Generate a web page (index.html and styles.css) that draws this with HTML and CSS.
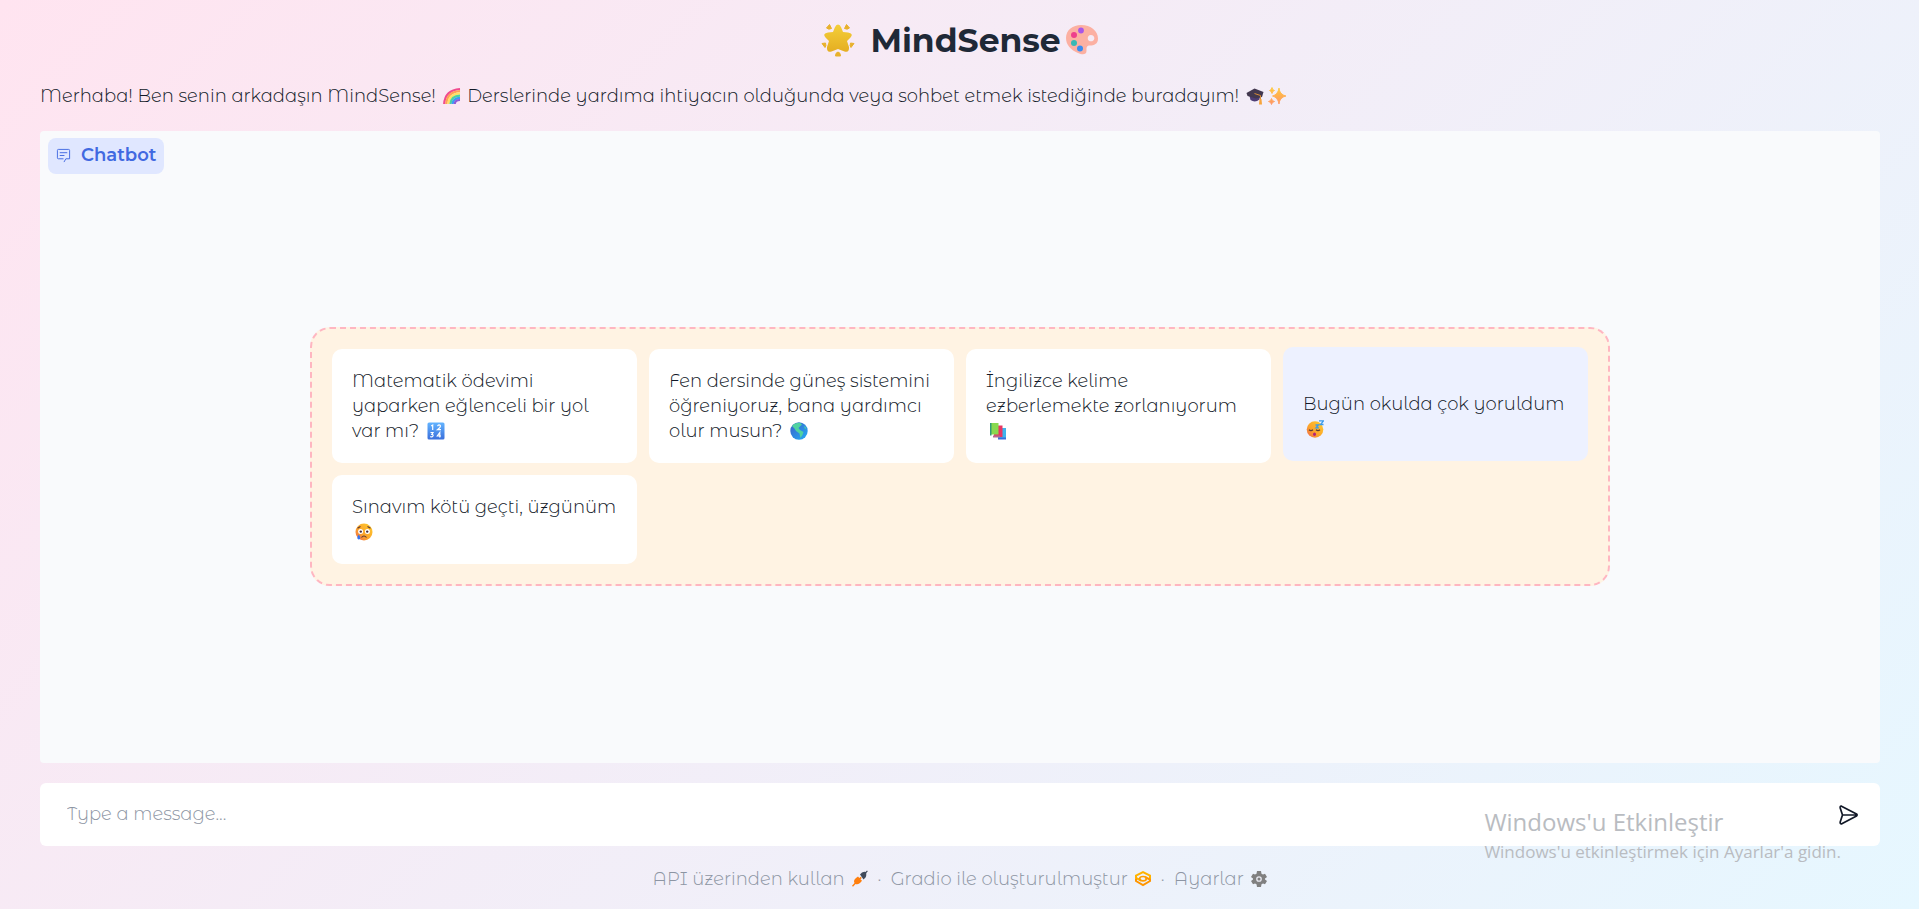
FILE: index.html
```html
<!DOCTYPE html>
<html lang="tr">
<head>
<meta charset="utf-8">
<meta name="viewport" content="width=device-width, initial-scale=1">
<title>MindSense</title>
<link rel="stylesheet" href="styles.css">
</head>
<body>
<svg class="defs" aria-hidden="true">
  <defs>
    <linearGradient id="gold" x1="0" y1="0" x2="0" y2="1"><stop offset="0" stop-color="#f4cf3a"/><stop offset="1" stop-color="#e5ae22"/></linearGradient>
    <linearGradient id="spark" x1="0" y1="0" x2="0" y2="1"><stop offset="0" stop-color="#ffca3c"/><stop offset="1" stop-color="#ff9566"/></linearGradient>
    <linearGradient id="blue" x1="0" y1="0" x2="0" y2="1"><stop offset="0" stop-color="#63b4ff"/><stop offset="1" stop-color="#3a6fdc"/></linearGradient>
    <linearGradient id="face" x1="1" y1="0" x2="0" y2="1"><stop offset="0" stop-color="#ffce2e"/><stop offset="0.6" stop-color="#fba32c"/><stop offset="1" stop-color="#f0624f"/></linearGradient>
    <linearGradient id="sea" x1="0" y1="0" x2="1" y2="1"><stop offset="0" stop-color="#3b5fc8"/><stop offset="1" stop-color="#22aef5"/></linearGradient>
  </defs>
</svg>
<main class="page">
  <h1 class="title">
    <svg class="title-icon" viewBox="0 0 34 34" aria-hidden="true">
      <path d="M17 1.500Q19 1.500 20.200 4.500L22 9L27 9.500Q33 10.500 29.500 14.500L26 18L28 24Q28.500 30 23.500 28.500L17 26L10.500 28.500Q5.500 30 6 24L8 18L4.500 14.500Q1 10.500 7 9.500L12 9L13.800 4.500Q15 1.500 17 1.500Z" fill="url(#gold)"/>
      <path d="M8.500 1.500L10.500 5.500Q7.500 7 5.500 5ZM25.500 1.500L23.500 5.500Q26.500 7 28.500 5ZM1 20.500L4.500 20Q5.500 23 4 24.500ZM33 20.500L29.500 20Q28.500 23 30 24.500ZM17 29Q19.500 29.500 19.500 33L14.500 33Q14.500 29.500 17 29Z" fill="#e8b12c" stroke="#e8b12c" stroke-linejoin="round"/>
    </svg>
    <span>MindSense</span>
    <svg class="title-icon palette" viewBox="0 0 34 34" aria-hidden="true">
      <path fill-rule="evenodd" d="M1 15C1 7 8 2 16 2C26 2 33 8 33 15.500C33 21 29 22.500 25 22.500C21 22.500 21.500 25 21.500 28C21.500 32 17 32 13 30C6 27 1 22 1 15ZM26 12C23.500 12 22.500 14 22.800 16C23.200 18.500 26.500 19 28.300 17.500C30.500 15.500 29 12 26 12Z" fill="#fcb0a2"/>
      <circle cx="16" cy="7.500" r="2.900" fill="#a955e8"/><circle cx="9" cy="12" r="3" fill="#ee3f8c"/><circle cx="9" cy="20" r="3" fill="#38b8b5"/><circle cx="15" cy="25.500" r="3" fill="#3b8cf0"/>
    </svg>
  </h1>
  <p class="intro">Merhaba! Ben senin arkadaşın MindSense!
    <svg class="emoji" viewBox="0 0 18 18" aria-hidden="true"><g fill="none" stroke-width="2.200"><path d="M1.200 17Q2 3 17 2" stroke="#f04b8e"/><path d="M3.300 17Q4 5 17 4.200" stroke="#ffa057"/><path d="M5.400 17Q6 7 17 6.400" stroke="#ffe066"/><path d="M7.500 17Q8 9 17 8.600" stroke="#4cd2a0"/><path d="M9.600 17Q10 11 17 10.800" stroke="#3d9cf5"/><path d="M11.700 17Q12 13 17 13" stroke="#8c5cd8"/></g></svg>
    Derslerinde yardıma ihtiyacın olduğunda veya sohbet etmek istediğinde buradayım!
    <svg class="emoji" viewBox="0 0 18 18" aria-hidden="true"><path d="M3.500 9L14 9L13.500 12.500Q9 16 4.500 13Z" fill="#4d3d75"/><path d="M.5 6L8.500 1.500L17.500 5L16 10L10 11.500L1.500 9Z" fill="#42384e"/><path d="M8.500 6.500L14.500 8.500V14" fill="none" stroke="#d98b35"/><path d="M13.500 12H15.500L16 17.500H13Z" fill="#f7a43c"/></svg><svg class="emoji" viewBox="0 0 18 18" aria-hidden="true"><path d="M11 1Q11.500 7.500 18 9Q11.500 10.500 11 17Q10 10.500 4.500 9Q10 7.500 11 1ZM4 .5Q4.300 3 6.500 3.500Q4.300 4 4 6.500Q3.500 4 1.500 3.500Q3.500 3 4 .5ZM3.500 11.500Q4 14 6.500 14.500Q4 15 3.500 17.500Q3 15 .5 14.500Q3 14 3.500 11.500Z" fill="url(#spark)" stroke="url(#spark)" stroke-width=".9"/></svg>
  </p>
  <section class="chat" aria-label="Chatbot">
    <div class="badge">
      <svg class="badge-icon" viewBox="0 0 16 16" aria-hidden="true"><path d="M8.500 15L10.500 11.500H14.500V2.500Q14.500 1.500 13.500 1.500H2.500Q1.500 1.500 1.500 2.500V10.500Q1.500 11.500 2.500 11.500H8M4 5H12M4 8H9" fill="none" stroke="currentColor"/></svg>
      <span>Chatbot</span>
    </div>
    <div class="suggestions">
      <button class="card" type="button"><span>Matematik ödevimi<br>yaparken eğlenceli bir yol<br>var mı? <svg class="emoji" viewBox="0 0 18 18" aria-hidden="true"><rect x=".5" y=".5" width="17" height="17" rx="1.500" fill="url(#blue)"/><path d="M4.200 4L5.700 3V8M10.500 4.200Q12 2 13.300 3.500Q14 5 10.500 7.700H14M3.500 10.500H6L4.800 12.300Q6.500 12.500 6 14Q5 15.500 3.300 14.500M12.800 15.500V10.500L10.300 14H14" fill="none" stroke="#fff" stroke-width="1.200"/></svg></span></button>
      <button class="card" type="button"><span>Fen dersinde güneş sistemini<br>öğreniyoruz, bana yardımcı<br>olur musun? <svg class="emoji" viewBox="0 0 18 18" aria-hidden="true"><circle cx="9" cy="9" r="8.700" fill="url(#sea)"/><path d="M2 4Q5 .5 10 .8L12 2.500L10.500 4L8.500 6L10 8L13.500 10L12.500 13L10.500 16L9.500 11.500L6 9L4.500 6.500ZM14 4L16.500 6L15 7Z" fill="#50d2a0"/></svg></span></button>
      <button class="card" type="button"><span>İngilizce kelime<br>ezberlemekte zorlanıyorum<br><svg class="emoji" viewBox="0 0 18 18" aria-hidden="true"><path d="M9 6H17V17H9Z" fill="#3fb4ec"/><path d="M9 15.500H17V17.500H9Z" fill="#376fdc"/><path d="M5 3.500H13.500V15H5Z" fill="#e83662"/><path d="M4 13.500H11V15.500H4Z" fill="#b56a91"/><path d="M1 1H9.500V12.500H1Z" fill="#88d950"/><path d="M1 1H2.500V13.500H1Z" fill="#2f9d78"/></svg></span></button>
      <button class="card card-active" type="button"><span>Bugün okulda çok yoruldum<br><svg class="emoji" viewBox="0 0 18 18" aria-hidden="true"><circle cx="9" cy="9.500" r="8.300" fill="url(#face)"/><path d="M3 9.800Q5 11.300 7 9.800M10 9.800Q12 11.300 14 9.800" fill="none" stroke="#5b3a35" stroke-width="1.300"/><ellipse cx="8.500" cy="14.300" rx="1.500" ry="1.700" fill="#b3237c"/><path d="M13 .8H17.500L14.500 4.500H17.500M9.500 5H12.500L10 7.800H13" fill="none" stroke="#3a9bea" stroke-width="1.300"/></svg></span></button>
      <button class="card" type="button"><span>Sınavım kötü geçti, üzgünüm<br><svg class="emoji" viewBox="0 0 18 18" aria-hidden="true"><circle cx="9" cy="9" r="8.500" fill="url(#face)"/><circle cx="5.600" cy="8.500" r="2.500" fill="#fff"/><circle cx="12.400" cy="8.500" r="2.500" fill="#fff"/><circle cx="5.800" cy="8.600" r="1.200" fill="#462d40"/><circle cx="12.200" cy="8.600" r="1.200" fill="#462d40"/><path d="M2.500 5.300L5.500 3.500M12.500 3.500L15.500 5.300M6.500 14.500Q9 11.500 11.500 14.500" fill="none" stroke="#5b3435" stroke-width="1.100"/><path d="M3.800 11.500Q6 14 5 16Q3.500 17.200 2.400 15.500Q2 14 3.800 11.500Z" fill="#3572f0"/></svg></span></button>
    </div>
  </section>
  <form class="composer">
    <input class="message" type="text" placeholder="Type a message..." aria-label="Type a message">
    <button class="send" type="button" aria-label="Gönder"><svg viewBox="0 0 22 22" aria-hidden="true"><path d="M3.500 2.200L18.500 10Q19.700 11 18.500 12L3.800 19.800Q1.800 20.200 2.200 18L4.500 11L2.200 4Q1.800 1.800 3.500 2.200ZM4.500 11H18.500" fill="none" stroke="currentColor" stroke-width="1.700" stroke-linejoin="round" stroke-linecap="round"/></svg></button>
  </form>
  <footer class="footer">
    <a class="link" href="#api">API üzerinden kullan <svg class="footer-icon" viewBox="0 0 16 18" aria-hidden="true"><path d="M8 4.500L10 2.500Q12.500 1.500 13.500 2L15 .5L15.800 1.300L14.300 3Q14.500 6 13.500 7.500L11.500 9.500Z" fill="#404b5c"/><path d="M4 8L6 6.500L7.300 8L8.700 6.700L9.800 8L8.500 9.300L10 10.800L8.500 12.500Q6.500 15 3.500 14L1 16.800L0 15.800L2.500 13Q1 10.500 4 8Z" fill="#ff7f0e"/></svg></a>
    <span>·</span>
    <a class="link" href="#gradio">Gradio ile oluşturulmuştur <svg class="footer-icon" viewBox="0 0 16 18" aria-hidden="true"><g fill="none" stroke-width="2"><path d="M15 9V5.500L8 2L1 5.500V8L6 10.500" stroke="#ffb300"/><path d="M1 8.500V11L8 15L15 11V9.500L10 7" stroke="#ff9500"/><ellipse cx="8" cy="8.700" rx="3.300" ry="2.200" stroke="#ff9d00" stroke-width="1.700"/></g></svg></a>
    <span>·</span>
    <button class="link" type="button">Ayarlar <svg class="footer-icon" viewBox="0 0 16 18" aria-hidden="true"><path d="M6 1H10L10.500 3.800L12 4.600L14 3.800L16 7L14 8.500V9.500L16 11L14 14.200L12 13.400L10.500 14.200L10 17H6L5.500 14.200L4 13.400L2 14.200L0 11L2 9.500V8.500L0 7L2 3.800L4 4.600L5.500 3.800Z" fill="#808080"/><circle cx="8" cy="9" r="2.200" fill="none" stroke="#e9eaf2" stroke-width="1.300"/></svg></button>
  </footer>
</main>
<aside class="watermark"><p class="watermark-title">Windows'u Etkinleştir</p><p class="watermark-text">Windows'u etkinleştirmek için Ayarlar'a gidin.</p></aside>
</body>
</html>
```
FILE: styles.css
```css
* { box-sizing: border-box; margin: 0; }
body {
  font: 300 18px/25px "Montserrat Alternates", Inter, "Open Sans", sans-serif;
  color: #111827;
  background: linear-gradient(135deg, #ffe4f0 0%, #e6f7ff 100%);
}
button, input { font: inherit; color: inherit; border: 0; background: none; padding: 0; }
.defs { position: absolute; width: 0; height: 0; }
.page { min-height: 100vh; display: flex; flex-direction: column; padding: 16px 39px 17px 40px; }
.title {
  display: flex; justify-content: center; align-items: center; color: #1f2937;
  font: 700 33px/48px Montserrat, Inter, sans-serif;
}
.title-icon { width: 34px; height: 34px; margin-right: 15px; }
.palette { margin: 0 0 0 4px; }
.intro { margin: 20px 0 22px; }
.emoji { width: 18px; height: 18px; margin: 0 2px; vertical-align: -3px; }
.card .emoji { margin: 0 3px; }
.chat {
  flex: 1; display: flex; flex-direction: column;
  padding: 7px 8px 24px; border-radius: 4px; background: #f9fafc;
}
.badge {
  align-self: flex-start; display: flex; align-items: center; gap: 10px;
  height: 36px; padding: 0 8px 2px; border-radius: 8px;
  background: #e0e7ff; color: #4169e1;
  font: 600 18px/24px Montserrat, Inter, sans-serif;
}
.badge-icon { width: 15px; height: 15px; }
.suggestions {
  width: 72%; max-width: 1300px; min-width: 300px;
  margin: auto;
  display: grid; grid-template-columns: repeat(4, 1fr); gap: 12px;
  padding: 20px; border: 2px dashed #ffb6c1; border-radius: 20px; background: #fff3e3;
}
.card {
  display: flex; align-items: flex-end; padding: 20px 16px 19px 20px;
  border-radius: 10px; background: #fff; text-align: left; white-space: nowrap;
}
.card-active { background: #edf1ff; transform: translateY(-2px); }
.composer {
  display: flex; align-items: center; margin: 20px 0 21px;
  height: 63px; padding: 0 20px 0 27px; border-radius: 6px; background: #fff;
}
.message { flex: 1; outline: 0; }
.message::placeholder { color: #8d95a3; opacity: 1; }
.send { width: 22px; height: 22px; }
.send svg { display: block; }
.footer { display: flex; justify-content: center; gap: 9px; color: #8d95a3; }
.link { color: inherit; text-decoration: none; }
.footer-icon { width: 16px; height: 18px; margin: 0 0 0 3px; vertical-align: -3px; }
.watermark {
  position: absolute; right: 78px; bottom: 44px; pointer-events: none;
  font: 400 17px/26px "Segoe UI", "Open Sans", sans-serif; color: #b9bcc1;
}
.watermark-title { font-size: 24px; line-height: 34px; }
```
